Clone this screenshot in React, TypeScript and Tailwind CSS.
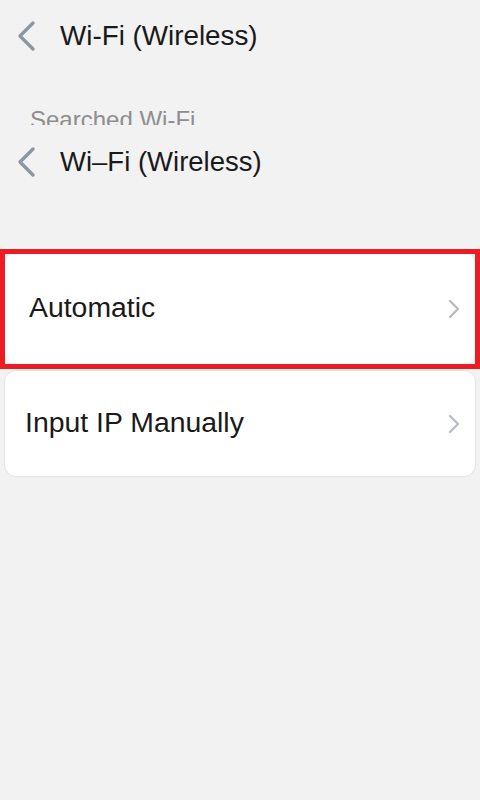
import React from "react";

const BackChevron = () => (
  <svg width="22" height="32" viewBox="0 0 22 32" className="shrink-0">
    <polyline points="18,3 5,16 18,29" fill="none" stroke="#8b97a3" strokeWidth="3.4" strokeLinecap="round" strokeLinejoin="round" />
  </svg>
);

const RightChevron = () => (
  <svg width="14" height="20" viewBox="0 0 14 20" className="shrink-0">
    <polyline points="3,2 11,10 3,18" fill="none" stroke="#b9bdc3" strokeWidth="2.4" strokeLinecap="round" strokeLinejoin="round" />
  </svg>
);

export default function App() {
  return (
    <div
      className="w-[480px] h-[800px] bg-[#f2f2f2] overflow-hidden text-[#1a1a1a]"
      style={{ fontFamily: '"Liberation Sans", Arial, sans-serif' }}
    >
      <div className="h-[72px] flex items-center pl-[15px]">
        <BackChevron />
        <span className="ml-[23px] text-[27.8px] leading-none">Wi-Fi (Wireless)</span>
      </div>
      <div className="h-[53px] overflow-hidden pl-[30px] pt-[36px]">
        <span className="block text-[24px] leading-none text-[#8e8e8e]">Searched Wi-Fi</span>
      </div>
      <div className="h-[73px] flex items-center pl-[15px]">
        <BackChevron />
        <span className="ml-[23px] text-[27.5px] leading-none">Wi–Fi (Wireless)</span>
      </div>
      <div className="mt-[51px] border-[5px] border-[#ec1c24] h-[120px]">
        <div className="h-full bg-white rounded-[10px] flex items-center justify-between pl-[24px] pr-[14px]">
          <span className="text-[28.4px] leading-none pb-[3px]">Automatic</span>
          <RightChevron />
        </div>
      </div>
      <div className="mx-[4px] mt-[1px] h-[107px] bg-white rounded-[12px] border border-[#e4e4e4] flex items-center justify-between pl-[20px] pr-[14px]">
        <span className="text-[28.4px] leading-none pb-[3px]">Input IP Manually</span>
        <RightChevron />
      </div>
    </div>
  );
}
